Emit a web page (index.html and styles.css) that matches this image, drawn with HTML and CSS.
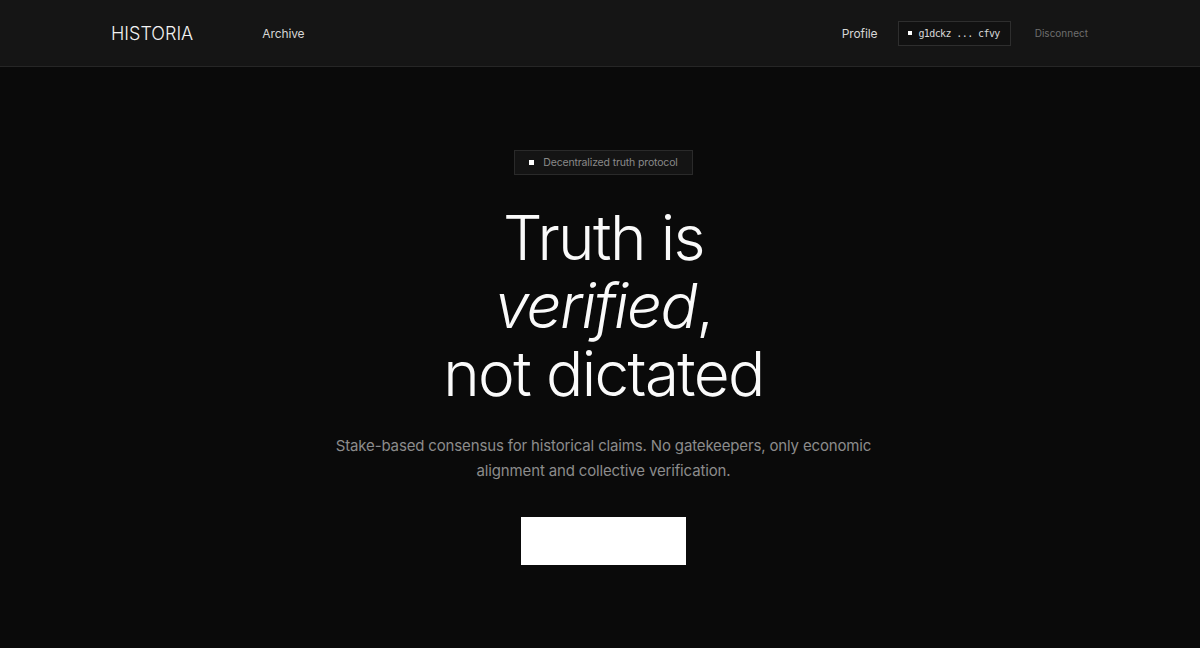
FILE: index.html
```html
<!DOCTYPE html>
<html lang="en">
<head>
  <meta charset="UTF-8" />
  <meta name="viewport" content="width=device-width, initial-scale=1" />
  <title>Historia</title>
  <link rel="stylesheet" href="styles.css">
</head>
<body>

<header class="topbar">
  <div class="topbar-inner">
    <div class="topbar-left">
      <a class="logo" href="#">HISTORIA</a>
      <a class="nav-link" href="#">Archive</a>
    </div>
    <div class="topbar-right">
      <a class="nav-link" href="#">Profile</a>
      <div class="wallet"><span class="dot"></span>g1dckz ... cfvy</div>
      <button class="disconnect">Disconnect</button>
    </div>
  </div>
</header>

<main class="hero">
  <div class="badge"><span class="dot"></span>Decentralized truth protocol</div>
  <h1 class="headline">Truth is<br><em>verified</em>,<br>not dictated</h1>
  <p class="lead">Stake-based consensus for historical claims. No gatekeepers, only economic alignment and collective verification.</p>
  <button class="cta"></button>
</main>

</body>
</html>
```

FILE: styles.css
```css
body {
  margin: 0;
  background: #0a0a0a;
  color: #fff;
  font-family: Inter, 'Helvetica Neue', Arial, sans-serif;
}
a {
  color: inherit;
  text-decoration: none;
}
.topbar {
  background: #151515;
  border-bottom: 1px solid #262626;
}
.topbar-inner {
  max-width: 976px;
  margin: 0 auto;
  height: 66px;
  display: flex;
  align-items: center;
  justify-content: space-between;
}
.topbar-left {
  display: flex;
  align-items: center;
  gap: 69px;
}
.logo {
  font-size: 18px;
  font-weight: 300;
  letter-spacing: 0;
  color: #f2f2f2;
  margin-left: -1px;
}
.nav-link {
  font-size: 12px;
  letter-spacing: -0.1px;
  color: #d6d6d6;
}
.topbar-right {
  display: flex;
  align-items: center;
  gap: 21px;
}
.wallet {
  display: flex;
  align-items: center;
  gap: 6px;
  height: 23px;
  padding: 0 10px 0 9px;
  border: 1px solid #2e2e2e;
  background: #111;
  font-family: 'DejaVu Sans Mono', 'Liberation Mono', monospace;
  font-size: 10px;
  letter-spacing: -0.6px;
  color: #d8d8d8;
}
.dot {
  width: 4px;
  height: 4px;
  background: #fff;
}
.disconnect {
  background: none;
  border: none;
  padding: 0;
  font-family: inherit;
  font-size: 10px;
  color: #6e6e6e;
  cursor: pointer;
  margin-left: 3px;
}
.hero {
  display: flex;
  flex-direction: column;
  align-items: center;
  text-align: center;
  padding: 83px 0 0 7px;
}
.badge {
  display: flex;
  align-items: center;
  gap: 9px;
  height: 23px;
  padding: 0 14px;
  border: 1px solid #2a2a2a;
  background: #141414;
  font-size: 10.5px;
  letter-spacing: -0.15px;
  color: #8a8a8a;
}
.badge .dot {
  width: 5px;
  height: 5px;
}
.headline {
  margin: 29px 0 0;
  font-size: 62px;
  font-weight: 300;
  line-height: 68px;
  letter-spacing: -1.6px;
  color: #fafafa;
}
.headline em {
  font-style: italic;
}
.lead {
  margin: 25px 0 0;
  max-width: 560px;
  font-size: 15px;
  line-height: 25px;
  letter-spacing: -0.15px;
  color: #8c8c8c;
}
.cta {
  margin-top: 34px;
  width: 165px;
  height: 48px;
  background: #fff;
  border: none;
  cursor: pointer;
}
```
